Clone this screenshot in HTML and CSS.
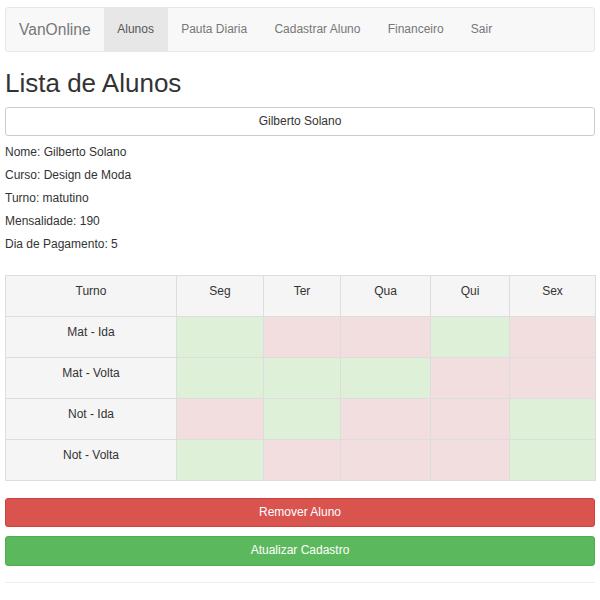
FILE: index.html
```html
<!DOCTYPE html>
<html lang="pt">
<head>
<meta charset="utf-8">
<title>VanOnline - Lista de Alunos</title>
<link rel="stylesheet" href="styles.css">
</head>
<body>
<div class="container">
  <nav class="navbar">
    <a class="brand" href="#">VanOnline</a>
    <ul class="nav">
      <li class="active"><a href="#">Alunos</a></li>
      <li><a href="#">Pauta Diaria</a></li>
      <li><a href="#">Cadastrar Aluno</a></li>
      <li><a href="#">Financeiro</a></li>
      <li><a href="#">Sair</a></li>
    </ul>
  </nav>

  <h2 class="title">Lista de Alunos</h2>

  <button class="btn btn-default">Gilberto Solano</button>

  <div class="info">
    <div class="line">Nome: Gilberto Solano</div>
    <div class="line">Curso: Design de Moda</div>
    <div class="line">Turno: matutino</div>
    <div class="line">Mensalidade: 190</div>
    <div class="line">Dia de Pagamento: 5</div>
  </div>

  <table class="grid">
    <colgroup>
      <col class="c-turno">
      <col class="c-seg">
      <col class="c-ter">
      <col class="c-qua">
      <col class="c-qui">
      <col class="c-sex">
    </colgroup>
    <thead>
      <tr>
        <th>Turno</th><th>Seg</th><th>Ter</th><th>Qua</th><th>Qui</th><th>Sex</th>
      </tr>
    </thead>
    <tbody>
      <tr>
        <td class="label">Mat - Ida</td>
        <td class="ok"></td><td class="no"></td><td class="no"></td><td class="ok"></td><td class="no"></td>
      </tr>
      <tr>
        <td class="label">Mat - Volta</td>
        <td class="ok"></td><td class="ok"></td><td class="ok"></td><td class="no"></td><td class="no"></td>
      </tr>
      <tr>
        <td class="label">Not - Ida</td>
        <td class="no"></td><td class="ok"></td><td class="no"></td><td class="no"></td><td class="ok"></td>
      </tr>
      <tr>
        <td class="label">Not - Volta</td>
        <td class="ok"></td><td class="no"></td><td class="no"></td><td class="no"></td><td class="ok"></td>
      </tr>
    </tbody>
  </table>

  <div class="actions">
    <button class="btn btn-danger">Remover Aluno</button>
    <button class="btn btn-success">Atualizar Cadastro</button>
  </div>

  <hr class="sep">
</div>
</body>
</html>
```

FILE: styles.css
```css
html, body {
  margin: 0;
  padding: 0;
  background: #fff;
}

body {
  font-family: "Liberation Sans", Arial, sans-serif;
  font-size: 12px;
  line-height: 17px;
  color: #333;
}

.container {
  padding: 7px 5px 0;
}

.navbar {
  display: flex;
  align-items: stretch;
  height: 43px;
  background: #f8f8f8;
  border: 1px solid #e7e7e7;
  border-radius: 3px;
}

.brand {
  display: flex;
  align-items: center;
  padding: 0 13px;
  font-size: 15.6px;
  color: #777;
  text-decoration: none;
}

.nav {
  display: flex;
  margin: 0;
  padding: 0;
  list-style: none;
}

.nav li {
  display: flex;
}

.nav a {
  display: flex;
  align-items: center;
  padding: 0 13.6px;
  color: #777;
  text-decoration: none;
}

.nav .active a {
  background: #e7e7e7;
  color: #555;
}

.title {
  margin: 17px 0 9px;
  font-size: 26px;
  line-height: 28.6px;
  font-weight: normal;
  color: #333;
}

.btn {
  display: block;
  width: 100%;
  height: 29px;
  padding: 0 10px;
  font-family: inherit;
  font-size: 12px;
  line-height: 17px;
  text-align: center;
  border: 1px solid transparent;
  border-radius: 3px;
  cursor: pointer;
}

.btn-default {
  background: #fff;
  border-color: #ccc;
  color: #333;
}

.btn-danger {
  background: #d9534f;
  border-color: #d43f3a;
  color: #fff;
}

.btn-success {
  background: #5cb85c;
  border-color: #4cae4c;
  color: #fff;
}

.info {
  display: flex;
  flex-direction: column;
  gap: 6px;
  margin-top: 8px;
}

.grid {
  width: 590px;
  margin-top: 22px;
  border-collapse: collapse;
  table-layout: fixed;
}

.c-turno { width: 171px; }
.c-seg { width: 87px; }
.c-ter { width: 77px; }
.c-qua { width: 90px; }
.c-qui { width: 79px; }
.c-sex { width: 86px; }

.grid th,
.grid td {
  height: 26px;
  padding: 7px;
  border: 1px solid #ddd;
  vertical-align: top;
  text-align: center;
  font-weight: normal;
}

.grid th,
.grid td.label {
  background: #f5f5f5;
}

.grid td.ok {
  background: #dff0d8;
}

.grid td.no {
  background: #f2dede;
}

.actions {
  display: flex;
  flex-direction: column;
  gap: 9px;
  margin-top: 17px;
}

.btn-danger,
.btn-success {
  height: 29.5px;
}

.sep {
  margin: 16px 0 0;
  border: 0;
  border-top: 1px solid #eee;
}
```
